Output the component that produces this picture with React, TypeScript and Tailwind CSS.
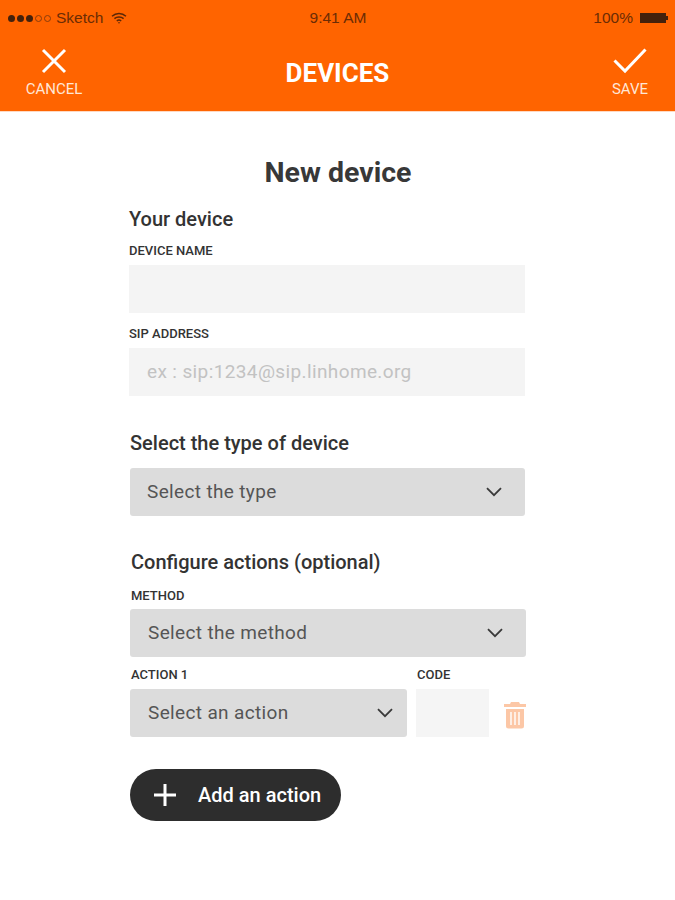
const roboto = "font-['Roboto',sans-serif]";

function Chevron({ className }: { className: string }) {
  return (
    <svg viewBox="0 0 16 10" className={className} fill="none" stroke="#3a3a3a" strokeWidth="1.8">
      <path d="M1 1.2l7 7 7-7" />
    </svg>
  );
}

function Label({ children }: { children: string }) {
  return <div className="text-[13px] leading-[13px] font-medium text-[#333]">{children}</div>;
}

function Select({ text, className }: { text: string; className: string }) {
  return (
    <div className={`${className} flex h-12 items-center justify-between rounded-[3px] bg-[#dcdcdc]`}>
      <span className="text-[19px] text-[#555] tracking-[0.35px]">{text}</span>
      <Chevron className="h-[10px] w-[16px]" />
    </div>
  );
}

function StatusBar() {
  return (
    <div className="flex h-[36px] items-center justify-between pl-[8px] pr-[7px] text-[15.5px] text-[#6b2c05] font-['Liberation_Sans',sans-serif]">
      <div className="flex w-[200px] items-center">
        <div className="flex items-center gap-[2px]">
          <span className="h-[7px] w-[7px] rounded-full bg-[#43210c]" />
          <span className="h-[7px] w-[7px] rounded-full bg-[#43210c]" />
          <span className="h-[7px] w-[7px] rounded-full bg-[#43210c]" />
          <span className="h-[7px] w-[7px] rounded-full border border-[#8a3c0c]" />
          <span className="h-[7px] w-[7px] rounded-full border border-[#8a3c0c]" />
        </div>
        <span className="ml-[5px]">Sketch</span>
        <svg viewBox="0 0 16 12" className="ml-[8px] h-[12px] w-[16px]" fill="none" stroke="#5b2807" strokeWidth="1.5">
          <path d="M1 4.200c4-3.600 10-3.600 14 0M3.400 6.600c2.600-2.200 6.600-2.200 9.200 0M5.800 9c1.200-1 3.200-1 4.400 0" />
          <circle cx="8" cy="10.800" r="0.800" fill="#5b2807" stroke="none" />
        </svg>
      </div>
      <span>9:41 AM</span>
      <div className="flex w-[200px] items-center justify-end gap-[7px]">
        <span>100%</span>
        <div className="flex items-center">
          <div className="h-[10px] w-[26px] bg-[#43210c]" />
          <div className="h-[4px] w-[2px] bg-[#43210c]" />
        </div>
      </div>
    </div>
  );
}

function Header() {
  return (
    <div className="h-[112px] border-b border-[#ffd9c2] bg-[#ff6400]">
      <StatusBar />
      <div className="flex items-start pt-[12px] text-white">
        <div className="w-[110px] pl-[25px]">
          <div className="flex w-[58px] flex-col items-center">
            <svg viewBox="0 0 26 26" className="h-[26px] w-[26px]" stroke="white" strokeWidth="3" fill="none">
              <path d="M2 2l22 22M24 2L2 24" />
            </svg>
            <span className="mt-[7px] text-[15px] leading-[16px] text-[#ffe6d6]">CANCEL</span>
          </div>
        </div>
        <span className="flex-1 pt-[11px] text-center text-[26px] leading-[28px] font-bold">DEVICES</span>
        <div className="flex w-[110px] justify-end pr-[26px]">
          <div className="flex w-[38px] flex-col items-center">
            <svg viewBox="0 0 34 26" className="h-[26px] w-[34px]" stroke="white" strokeWidth="3" fill="none">
              <path d="M1.500 12.500L12 23 32.500 1.500" />
            </svg>
            <span className="mt-[7px] text-[15px] leading-[16px] text-[#ffe6d6]">SAVE</span>
          </div>
        </div>
      </div>
    </div>
  );
}

export default function App() {
  return (
    <div className={`${roboto} h-[900px] w-[675px] bg-white`}>
      <Header />
      <div className="flex flex-col pl-[129px]">
        <h1 className="mt-[44px] w-[418px] text-center text-[28.5px] leading-[34px] font-bold text-[#383838]">New device</h1>

        <h2 className="mt-[18px] text-[20px] leading-[22px] font-medium text-[#333]">Your device</h2>
        <div className="mt-[14px]"><Label>DEVICE NAME</Label></div>
        <div className="mt-[8px] h-12 w-[396px] bg-[#f4f4f4]" />
        <div className="mt-[14px]"><Label>SIP ADDRESS</Label></div>
        <div className="mt-[8px] flex h-12 w-[396px] items-center bg-[#f4f4f4] pl-[18px] text-[19px] text-[#c2c2c2] tracking-[0.38px]">
          ex : sip:1234@sip.linhome.org
        </div>

        <div className="ml-[1px] flex flex-col">
          <h2 className="mt-[36px] text-[20px] leading-[22px] font-medium text-[#333]">Select the type of device</h2>
          <div className="mt-[14px]"><Select text="Select the type" className="w-[395px] pl-[17px] pr-[23px]" /></div>

          <h2 className="mt-[35px] ml-[1px] text-[20px] leading-[22px] font-medium text-[#333]">Configure actions (optional)</h2>
          <div className="mt-[16px] ml-[1px]"><Label>METHOD</Label></div>
          <div className="mt-[7px]"><Select text="Select the method" className="w-[396px] pl-[18px] pr-[23px]" /></div>
          <div className="mt-[11px] ml-[1px] flex">
            <div className="w-[286px]"><Label>ACTION 1</Label></div>
            <Label>CODE</Label>
          </div>
          <div className="mt-[8px] flex items-center">
            <Select text="Select an action" className="w-[277px] pl-[18px] pr-[14px]" />
            <div className="ml-[9px] h-12 w-[73px] bg-[#f5f5f5]" />
            <svg viewBox="0 0 24 28" className="ml-[14px] mt-[4px] h-[28px] w-[24px]" fill="#fcc7a6">
              <path d="M8 1h8l1 2h6v3H1V3h6l1-2zM3 8h18v17a2.500 2.500 0 0 1-2.500 2.500h-13A2.500 2.500 0 0 1 3 25V8z" />
              <path d="M8 11v13M12 11v13M16 11v13" stroke="#fff" strokeWidth="1.4" />
            </svg>
          </div>

          <button className="mt-[32px] flex h-[52px] w-[211px] items-center rounded-full bg-[#2d2d2d] pl-[23px] text-white">
            <svg viewBox="0 0 24 24" className="h-[24px] w-[24px]" stroke="white" strokeWidth="3" fill="none">
              <path d="M12 1v22M1 12h22" />
            </svg>
            <span className="ml-[21px] text-[20px] font-medium">Add an action</span>
          </button>
        </div>
      </div>
    </div>
  );
}
